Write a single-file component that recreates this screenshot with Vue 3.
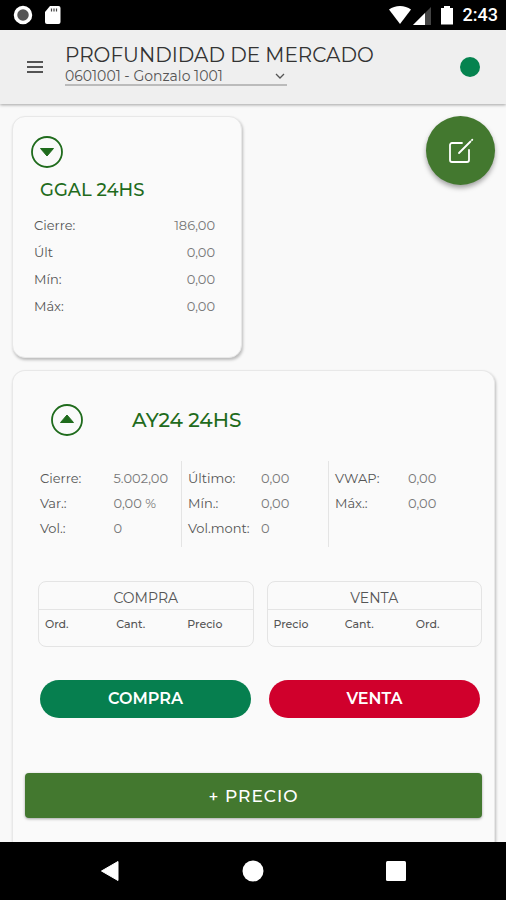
<script setup>
import { ref } from 'vue'

const accounts = ['0601001 - Gonzalo 1001']
const account = ref(accounts[0])

const summary = [
  { label: 'Cierre:', value: '186,00' },
  { label: 'Últ', value: '0,00' },
  { label: 'Mín:', value: '0,00' },
  { label: 'Máx:', value: '0,00' }
]

const stats = [
  [
    { label: 'Cierre:', value: '5.002,00' },
    { label: 'Var.:', value: '0,00 %' },
    { label: 'Vol.:', value: '0' }
  ],
  [
    { label: 'Último:', value: '0,00' },
    { label: 'Mín.:', value: '0,00' },
    { label: 'Vol.mont:', value: '0' }
  ],
  [
    { label: 'VWAP:', value: '0,00' },
    { label: 'Máx.:', value: '0,00' }
  ]
]

const books = [
  { title: 'COMPRA', columns: ['Ord.', 'Cant.', 'Precio'] },
  { title: 'VENTA', columns: ['Precio', 'Cant.', 'Ord.'] }
]
</script>

<template>
  <div class="screen">
    <div class="status">
      <svg class="status-left" width="50" height="22" viewBox="0 0 50 22">
        <circle cx="11" cy="11" r="7.500" fill="#555" stroke="#fff" stroke-width="3.500" />
        <path d="M38 2h8.500a2 2 0 0 1 2 2v14a2 2 0 0 1-2 2H35a2 2 0 0 1-2-2V8z" fill="#fff" />
        <path d="M39.500 4.500v3M42 4.500v3M44.500 4.500v3" stroke="#444" stroke-width="1.200" />
      </svg>
      <div class="status-right">
        <svg width="66" height="22" viewBox="0 0 66 22">
          <path d="M0 5.500C6 .8 16 .8 22 5.500L11 20z" fill="#fff" />
          <path d="M42 3v18H24z" fill="#444" />
          <path d="M36 9v12H24z" fill="#fff" />
          <path d="M55 2h6v2h3v16.500H52V4h3z" fill="#fff" />
        </svg>
        <span>2:43</span>
      </div>
    </div>

    <header class="topbar">
      <button class="menu" type="button" aria-label="Menú">
        <svg width="18" height="14" viewBox="0 0 18 14" stroke="#222" stroke-width="1.600">
          <path d="M1 2h16M1 7h16M1 12h16" />
        </svg>
      </button>
      <div class="heading">
        <h1>PROFUNDIDAD DE MERCADO</h1>
        <div class="picker">
          <select v-model="account" aria-label="Cuenta">
            <option v-for="item in accounts" :key="item">{{ item }}</option>
          </select>
          <svg width="10" height="6" viewBox="0 0 10 6" fill="none" stroke="#555" stroke-width="1.300">
            <path d="M1 1l4 4 4-4" />
          </svg>
        </div>
      </div>
      <span class="online"></span>
    </header>

    <main class="content">
      <div class="first-row">
        <section class="card compact">
          <button class="toggle" type="button" aria-label="Expandir">
            <svg width="32" height="32" viewBox="0 0 32 32">
              <circle cx="16" cy="16" r="15" fill="none" stroke="#1f6b1c" stroke-width="1.800" />
              <path d="M9.500 12.500h13L16 20z" fill="#1f6b1c" stroke="#1f6b1c" stroke-linejoin="round" />
            </svg>
          </button>
          <h2>GGAL 24HS</h2>
          <dl class="summary">
            <div v-for="row in summary" :key="row.label">
              <dt>{{ row.label }}</dt>
              <dd>{{ row.value }}</dd>
            </div>
          </dl>
        </section>
        <button class="fab" type="button" aria-label="Editar">
          <svg width="26" height="26" viewBox="0 0 26 26" fill="none" stroke="#fff" stroke-width="1.800" stroke-linecap="round" stroke-linejoin="round">
            <path d="M14 5H4a2 2 0 0 0-2 2v15a2 2 0 0 0 2 2h15a2 2 0 0 0 2-2V12" />
            <path d="M11 15L22.500 3.500M24 2l.3-.3" />
          </svg>
        </button>
      </div>

      <section class="card detail">
        <div class="detail-head">
          <button class="toggle" type="button" aria-label="Contraer">
            <svg width="32" height="32" viewBox="0 0 32 32">
              <circle cx="16" cy="16" r="15" fill="none" stroke="#1f6b1c" stroke-width="1.800" />
              <path d="M9.500 18.500h13L16 11z" fill="#1f6b1c" stroke="#1f6b1c" stroke-linejoin="round" />
            </svg>
          </button>
          <h2>AY24 24HS</h2>
        </div>

        <div class="stats">
          <dl v-for="(group, i) in stats" :key="i">
            <div v-for="row in group" :key="row.label">
              <dt>{{ row.label }}</dt>
              <dd>{{ row.value }}</dd>
            </div>
          </dl>
        </div>

        <div class="books">
          <table v-for="book in books" :key="book.title" class="book">
            <thead>
              <tr>
                <th class="book-title" colspan="3">{{ book.title }}</th>
              </tr>
              <tr>
                <th v-for="column in book.columns" :key="column">{{ column }}</th>
              </tr>
            </thead>
          </table>
        </div>

        <div class="orders">
          <button class="order buy" type="button">COMPRA</button>
          <button class="order sell" type="button">VENTA</button>
        </div>

        <button class="add-price" type="button">+ PRECIO</button>
      </section>
    </main>

    <nav class="system-nav">
      <button type="button" aria-label="Atrás">
        <svg width="22" height="22" viewBox="0 0 22 22"><path d="M19 1.500v19L2.500 11z" fill="#fff" stroke="#fff" stroke-linejoin="round" /></svg>
      </button>
      <button type="button" aria-label="Inicio">
        <svg width="22" height="22" viewBox="0 0 22 22"><circle cx="11" cy="11" r="10.500" fill="#fff" /></svg>
      </button>
      <button type="button" aria-label="Recientes">
        <svg width="22" height="22" viewBox="0 0 22 22"><rect x="1" y="1" width="20" height="20" rx="1.500" fill="#fff" /></svg>
      </button>
    </nav>
  </div>
</template>

<style>
body {
  margin: 0;
  background: #f9f9f9;
}
</style>

<style scoped>
.screen {
  display: flex;
  flex-direction: column;
  min-height: 100vh;
  background: #f9f9f9;
  color: #555;
  font-family: Montserrat, Inter, "Open Sans", sans-serif;
  font-size: 13px;
}
.screen *,
.screen {
  box-sizing: border-box;
}
svg {
  display: block;
}
button {
  padding: 0;
  border: 0;
  background: none;
  color: inherit;
  font-family: inherit;
  cursor: pointer;
}
h1,
h2,
dl,
dd {
  margin: 0;
}
.status {
  display: flex;
  justify-content: space-between;
  align-items: center;
  height: 30px;
  padding: 0 8px 0 12px;
  background: #000;
}
.status-right {
  display: flex;
  align-items: center;
  gap: 8px;
  color: #fff;
  font: 500 18px/24px Roboto, sans-serif;
}
.topbar {
  display: flex;
  align-items: center;
  height: 74px;
  padding: 0 26px;
  background: #efefef;
  box-shadow: 0 1px 3px rgba(0, 0, 0, 0.35);
}
.heading {
  flex: 1;
  padding: 0 0 5px 21px;
}
h1 {
  color: #333;
  font-size: 20px;
  font-weight: 400;
  line-height: 24px;
}
.picker {
  display: grid;
  align-items: center;
  max-width: 222px;
  border-bottom: 2px solid #bbb;
}
.picker > * {
  grid-area: 1 / 1;
}
.picker svg {
  justify-self: end;
  margin-right: 2px;
  pointer-events: none;
}
select {
  width: 100%;
  height: 17px;
  padding: 0;
  border: 0;
  background: none;
  color: #555;
  font: inherit;
  font-size: 14px;
  line-height: 16px;
  appearance: none;
}
.online {
  width: 20px;
  height: 20px;
  border-radius: 50%;
  background: #05834f;
}
.content {
  flex: 1;
  display: flex;
  flex-direction: column;
  gap: 12px;
  padding: 12px 11px 0 12px;
}
.first-row {
  display: flex;
  justify-content: space-between;
  align-items: flex-start;
}
.card {
  border: 1px solid #e8e8e8;
  border-radius: 13px;
  background: #fafafa;
  box-shadow: 1px 2px 3px rgba(0, 0, 0, 0.25);
}
.compact {
  flex: 0 1 230px;
  padding: 19px 26px 37px 18px;
}
h2 {
  color: #1f6b1c;
  font-size: 18px;
  font-weight: 500;
  line-height: 24px;
}
.compact h2 {
  padding: 7px 0 0 9px;
}
.summary {
  padding: 10px 0 0 3px;
}
.summary div {
  display: flex;
  justify-content: space-between;
  line-height: 27px;
}
dd {
  color: #777;
}
.fab {
  display: grid;
  place-items: center;
  width: 69px;
  height: 69px;
  border-radius: 50%;
  background: #43782f;
  box-shadow: 0 3px 5px rgba(0, 0, 0, 0.35);
}
.detail {
  flex: 1;
  padding: 33px 12px 24px;
  border-bottom: 0;
  border-radius: 13px 13px 0 0;
}
.detail-head {
  display: flex;
  align-items: center;
  gap: 49px;
  padding-left: 26px;
}
.detail-head h2 {
  font-size: 20px;
}
.stats {
  display: grid;
  grid-template-columns: repeat(3, 1fr);
  padding: 25px 7px 0 9px;
}
.stats dl {
  padding: 5px 0 6px 6px;
  line-height: 25px;
}
.stats dl + dl {
  border-left: 1px solid #e4e4e4;
}
.stats dl div {
  display: grid;
  grid-template-columns: 73fr 67fr;
  white-space: nowrap;
}
.books {
  display: grid;
  grid-template-columns: 1fr 1fr;
  gap: 13px;
  padding: 34px 0 0 13px;
}
.book {
  width: 100%;
  height: 66px;
  border: 1px solid #e4e4e4;
  border-radius: 8px;
  border-spacing: 0;
  table-layout: fixed;
}
th {
  height: 36px;
  padding: 6px 0 0 6px;
  font-size: 11px;
  font-weight: 500;
  line-height: 16px;
  text-align: left;
  vertical-align: top;
}
.book-title {
  height: 28px;
  padding: 6px 0 0;
  border-bottom: 1px solid #e4e4e4;
  font-size: 14px;
  font-weight: 400;
  line-height: 21px;
  text-align: center;
}
.orders {
  display: grid;
  grid-template-columns: 1fr 1fr;
  gap: 18px;
  padding: 33px 2px 0 15px;
}
.order {
  height: 38px;
  padding-bottom: 2px;
  border-radius: 19px;
  color: #fff;
  font-size: 16px;
  font-weight: 600;
}
.buy {
  background: #067f4f;
}
.sell {
  background: #d0002c;
}
.add-price {
  display: block;
  width: 100%;
  height: 45px;
  margin-top: 55px;
  border-radius: 4px;
  background: #43782f;
  box-shadow: 0 1px 3px rgba(0, 0, 0, 0.35);
  color: #fff;
  font-size: 17px;
  font-weight: 500;
  letter-spacing: 1px;
}
.system-nav {
  position: relative;
  display: grid;
  grid-template-columns: repeat(3, 1fr);
  height: 58px;
  padding: 0 39px;
  background: #000;
}
.system-nav button {
  display: grid;
  place-items: center;
}
</style>
